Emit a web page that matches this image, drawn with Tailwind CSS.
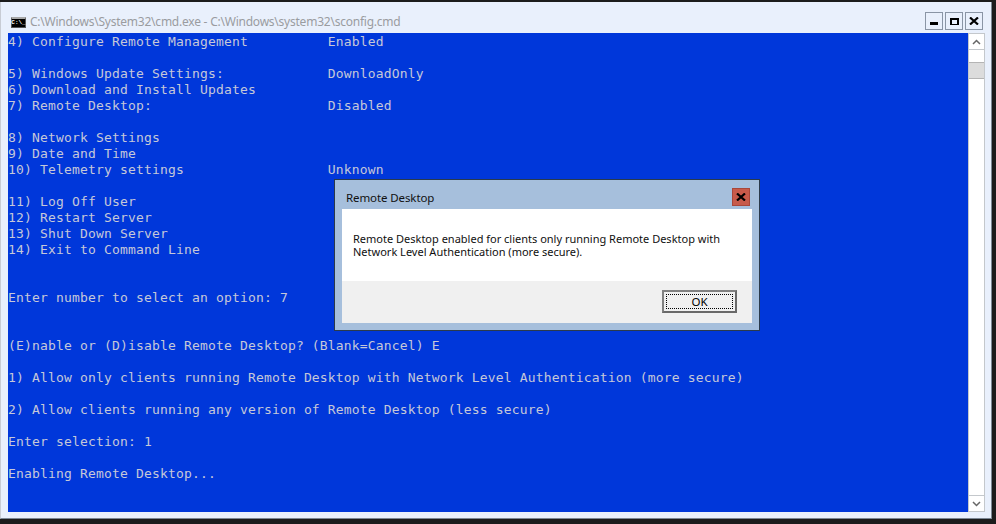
<!DOCTYPE html>
<html><head><meta charset="utf-8"><script src="https://cdn.jsdelivr.net/npm/@tailwindcss/browser@4"></script></head>
<body class="m-0 w-[996px] h-[524px] overflow-hidden bg-[#1c1c1c]">
<div class="relative w-[996px] h-[524px] pt-[2px]">
<div class="flex flex-col w-[992px] h-[517px] bg-[#e9f0fc] border border-[#7c8794] border-t-0 border-l-[#c8ccd4]">
  <div class="h-[31px] flex items-end pl-[10px] pb-[1px] shrink-0">
    <div class="w-[15px] h-[11px] mb-[4px] bg-black border border-[#555] border-t-[2px] border-t-[#a8a8a8] flex items-center justify-center">
      <span class="font-['Liberation_Mono'] text-[6px] leading-none text-white font-bold">C:\_</span>
    </div>
    <span class="ml-[4px] font-['Noto_Sans',sans-serif] text-[12px] tracking-[-0.23px] leading-[20px] text-[#9a9ca0] whitespace-nowrap">C:\Windows\System32\cmd.exe - C:\Windows\system32\sconfig.cmd</span>
  </div>
  <div class="flex h-[479px] ml-[7px] shrink-0">
    <pre class="w-[960px] h-[479px] overflow-hidden bg-[#0037da] text-[#c6c8d8] font-['DejaVu_Sans_Mono',monospace] text-[13px] tracking-[0.17px] leading-[16px] m-0 pt-[1px]">4) Configure Remote Management          Enabled

5) Windows Update Settings:             DownloadOnly
6) Download and Install Updates
7) Remote Desktop:                      Disabled

8) Network Settings
9) Date and Time
10) Telemetry settings                  Unknown

11) Log Off User
12) Restart Server
13) Shut Down Server
14) Exit to Command Line


Enter number to select an option: 7


(E)nable or (D)isable Remote Desktop? (Blank=Cancel) E

1) Allow only clients running Remote Desktop with Network Level Authentication (more secure)

2) Allow clients running any version of Remote Desktop (less secure)

Enter selection: 1

Enabling Remote Desktop...</pre>
    <div class="w-[17px] h-[479px] bg-white border border-[#c4c8cc] flex flex-col">
      <div class="h-[16px] flex items-center justify-center border-b border-[#c4c8cc]">
        <svg width="9" height="6" viewBox="0 0 9 6"><path d="M1 5L4.5 1.5L8 5" fill="none" stroke="#666" stroke-width="1.5"/></svg>
      </div>
      <div class="h-[12px]"></div>
      <div class="h-[17px] bg-[#dcdcdc] border-y border-[#b4b4b4]"></div>
      <div class="flex-1"></div>
      <div class="h-[16px] flex items-center justify-center border-t border-[#c4c8cc]">
        <svg width="9" height="6" viewBox="0 0 9 6"><path d="M1 1L4.5 4.5L8 1" fill="none" stroke="#666" stroke-width="1.5"/></svg>
      </div>
    </div>
  </div>
</div>
<div class="absolute left-[925px] top-[12px] flex gap-[2px]">
  <div class="w-[18px] h-[18px] bg-[#e9f0fc] border border-[#8a95a5] flex items-center justify-center"><div class="w-[8px] h-[3px] bg-black mt-[5px]"></div></div>
  <div class="w-[18px] h-[18px] bg-[#e9f0fc] border border-[#8a95a5] flex items-center justify-center"><div class="w-[9px] h-[7px] border border-black border-t-[2px] border-x-[2px]"></div></div>
  <div class="w-[18px] h-[18px] bg-[#e9f0fc] border border-[#8a95a5] flex items-center justify-center"><svg width="10" height="8" viewBox="0 0 10 8"><path d="M1 0.5L9 7.5M9 0.5L1 7.5" stroke="#000" stroke-width="2.2"/></svg></div>
</div>
<div class="absolute left-[334px] top-[179px] w-[426px] h-[152px] bg-[#a6bfdc] border border-[#2a3a4c] flex flex-col px-[7px] pb-[7px]">
  <div class="h-[29px] shrink-0 flex items-center pl-[4px] pt-[6px] font-['Noto_Sans',sans-serif] text-[11.5px] tracking-[-0.1px] text-[#111]">Remote Desktop</div>
  <div class="flex-1 bg-white flex flex-col">
    <div class="h-[72px] pl-[11px] pt-[23px] font-['Noto_Sans',sans-serif] text-[11px] leading-[13px] text-[#101010]">Remote Desktop enabled for clients only running Remote Desktop with<br>Network Level Authentication (more secure).</div>
    <div class="flex-1 bg-[#f0f0f0] flex justify-end items-start pt-[9px] pr-[15px]">
      <div class="w-[75px] h-[23px] border-2 border-[#808080] border-b-[#696969] border-r-[#696969] bg-[#f0f0f0] p-[2px]">
        <div class="w-full h-full border border-dotted border-black flex items-center justify-center font-['Noto_Sans',sans-serif] text-[11.5px] leading-none text-black">OK</div>
      </div>
    </div>
  </div>
  <div class="absolute left-[397px] top-[8px] w-[18px] h-[18px] bg-[#c75a4a] border border-[#a9473a] flex items-center justify-center"><svg width="10" height="8" viewBox="0 0 10 8"><path d="M1 0.5L9 7.5M9 0.5L1 7.5" stroke="#000" stroke-width="2.2"/></svg></div>
</div>
</div>
</body></html>
